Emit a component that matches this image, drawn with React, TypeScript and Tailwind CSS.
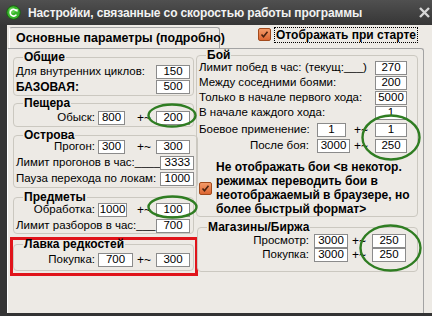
import type { ReactNode } from 'react'

function Inp({ v, w }: { v: string; w: string }) {
  return (
    <div className={`${w} h-[14px] flex-shrink-0 bg-white border border-[#8B8B8B] flex items-center justify-center text-[11.5px] leading-none text-black`}>
      {v}
    </div>
  )
}

function Group({ title, className, children }: { title: string; className: string; children: ReactNode }) {
  return (
    <fieldset className={`border border-[#CBC8C0] rounded-[4px] px-[2px] ${className}`}>
      <legend className="ml-[7px] px-[1px] text-[12px] font-bold leading-[8px] text-black">{title}</legend>
      {children}
    </fieldset>
  )
}

function Check() {
  return (
    <div className="w-[13px] h-[13px] flex-shrink-0 rounded-[2px] border border-[#A24A1C] bg-linear-to-b from-[#F39A68] to-[#DC6530] flex items-center justify-center">
      <svg width="9" height="9" viewBox="0 0 9 9">
        <path d="M1.5 4.5 L3.5 6.8 L7.5 1.8" fill="none" stroke="#4A2210" strokeWidth="1.6" />
      </svg>
    </div>
  )
}

// single input row on the left side
function RowL({ label, v, bold, h }: { label: string; v: string; bold?: boolean; h: string }) {
  return (
    <div className={`${h} flex items-center justify-between pr-[1px]`}>
      <span className={`whitespace-nowrap ${bold ? 'text-[12px] font-bold' : 'text-[11.5px]'}`}>{label}</span>
      <Inp v={v} w="w-[34px]" />
    </div>
  )
}

// label + pair of inputs on the left side
function PairL({ label, a, aw, b, h }: { label: string; a: string; aw: string; b: string; h: string }) {
  return (
    <div className={`${h} flex items-center text-[11.5px]`}>
      <span className="w-[79px] text-right whitespace-nowrap">{label}</span>
      <div className="w-[42px] pl-[3px] flex">
        <Inp v={a} w={aw} />
      </div>
      <span className="w-[19px] text-[12px]">+~</span>
      <Inp v={b} w="w-[34px]" />
    </div>
  )
}

function Ellipse({ cls, w, h }: { cls: string; w: number; h: number }) {
  return (
    <svg className={`absolute ${cls}`} width={w} height={h} viewBox={`0 0 ${w} ${h}`}>
      <ellipse cx={w / 2} cy={h / 2} rx={w / 2 - 1.5} ry={h / 2 - 1.5} fill="none" stroke="#2F7D22" strokeWidth="2.4" />
    </svg>
  )
}

export default function App() {
  return (
    <div className="relative w-[432px] h-[316px] overflow-hidden bg-[#333333] flex flex-col font-['Liberation_Sans',Arial,sans-serif] text-black">
      {/* Title bar */}
      <div className="h-[25px] flex-shrink-0 flex items-center bg-linear-to-b from-[#505050] to-[#363636]">
        <svg className="ml-[6px]" width="15" height="15" viewBox="0 0 15 15">
          <circle cx="7.5" cy="7.5" r="6.8" fill="#37B52A" stroke="#1C5E14" strokeWidth="1" />
          <circle cx="6" cy="5.5" r="3" fill="#7FE06A" opacity="0.6" />
          <path d="M10.6 6.2 A3.4 3.4 0 1 0 10.4 9.6" fill="none" stroke="#fff" strokeWidth="1.6" />
          <path d="M9 4.6 L11.8 4.2 L11.3 7.2 Z" fill="#fff" />
        </svg>
        <span className="ml-[7px] text-[12px] font-bold tracking-[-0.12px] text-[#F2F2F2] whitespace-nowrap">
          Настройки, связанные со скоростью работы программы
        </span>
        <div className="flex-1" />
        <svg className="mr-[2px]" width="11" height="11" viewBox="0 0 11 11">
          <path d="M1 1 L10 10 M10 1 L1 10" stroke="#D6D6D6" strokeWidth="2.4" />
        </svg>
      </div>

      <div className="flex-1 flex min-h-0">
        <div className="w-[7px] flex-shrink-0 bg-[#353535]" />
        <div className="flex-1 mb-[3px] bg-[#EDEAE5] flex flex-col min-w-0">
          {/* Tab strip */}
          <div className="h-[23px] flex-shrink-0 flex items-end">
            <div className="ml-[2px] w-[211px] h-[21px] border-l border-t border-r border-[#A3A3A3] border-l-white rounded-t-[3px] flex items-center pl-[6px]">
              <span className="text-[12.4px] font-bold whitespace-nowrap">Основные параметры (подробно)</span>
            </div>
            <div className="ml-[38px] mb-[5px] flex items-center self-end h-[17px]">
              <Check />
              <span className="ml-[3px] px-[1px] border border-dotted border-black text-[12px] font-bold leading-[14px] whitespace-nowrap">
                Отображать при старте
              </span>
            </div>
          </div>

          {/* Panel */}
          <div className="flex-1 w-[417px] border-t border-l border-r border-t-[#A3A3A3] border-l-white border-r-[#A3A3A3] rounded-tr-[3px] flex">
            {/* Left column */}
            <div className="w-[189px] pl-[2px] flex flex-col">
              <Group title="Общие" className="ml-[3px] w-[181px] mt-[4px] pt-[3px] pb-[1px]">
                <RowL label="Для внутренних циклов:" v="150" h="h-[15px]" />
                <RowL label="БАЗОВАЯ:" v="500" bold h="h-[15px]" />
              </Group>
              <Group title="Пещера" className="ml-[3px] w-[181px] mt-[3px] pt-[3px] pb-[1px]">
                <PairL label="Обыск:" a="800" aw="w-[27px]" b="200" h="h-[15px]" />
              </Group>
              <Group title="Острова" className="ml-[3px] w-[181px] mt-[4px] pb-0">
                <PairL label="Прогон:" a="300" aw="w-[27px]" b="300" h="h-[16px]" />
                <RowL label="Лимит прогонов в час:____" v="3333" h="h-[16px]" />
                <RowL label="Пауза перехода по локам:" v="1000" h="h-[16px]" />
              </Group>
              <Group title="Предметы" className="ml-[3px] w-[181px] mt-[5px] pt-[1px] pb-0">
                <PairL label="Обработка:" a="1000" aw="w-[29px]" b="100" h="h-[16px]" />
                <RowL label="Лимит разборов в час:___" v="700" h="h-[15px]" />
              </Group>
              <div className="mt-[3px] w-[188px] border-[3px] border-[#E0141B] pb-[2px]">
                <Group title="Лавка редкостей" className="w-[181px] pt-[4px] pb-[3px]">
                  <PairL label="Покупка:" a="700" aw="w-[35px]" b="300" h="h-[15px]" />
                </Group>
              </div>
            </div>

            {/* Right column */}
            <div className="flex flex-col">
              <Group title="Бой" className="-ml-[1px] w-[222px] mt-[2px] pt-[1px] pb-0">
                <div className="h-[15px] flex items-center text-[11.5px] whitespace-nowrap">
                  <span className="w-[106px]">Лимит побед в час:</span>
                  <span>(текущ:___)</span>
                  <div className="flex-1" />
                  <div className="mr-[8px]"><Inp v="270" w="w-[32px]" /></div>
                </div>
                <div className="h-[15px] flex items-center justify-between text-[11.5px] whitespace-nowrap">
                  <span>Между соседними боями:</span>
                  <div className="mr-[8px]"><Inp v="200" w="w-[32px]" /></div>
                </div>
                <div className="h-[15px] flex items-center justify-between text-[11.5px] whitespace-nowrap">
                  <span>Только в начале первого хода:</span>
                  <div className="mr-[8px]"><Inp v="5000" w="w-[32px]" /></div>
                </div>
                <div className="h-[15px] flex items-center justify-between text-[11.5px] whitespace-nowrap">
                  <span>В начале каждого хода:</span>
                  <div className="mr-[8px]"><Inp v="1" w="w-[32px]" /></div>
                </div>
                <div className="mt-[2px] h-[16px] flex items-center text-[11.5px] whitespace-nowrap">
                  <span className="w-[110px] text-right">Боевое применение:</span>
                  <div className="w-[45px] pl-[8px] flex"><Inp v="1" w="w-[29px]" /></div>
                  <span className="w-[21px] text-[12px]">+~</span>
                  <Inp v="1" w="w-[32px]" />
                </div>
                <div className="h-[16px] flex items-center text-[11.5px] whitespace-nowrap">
                  <span className="w-[110px] text-right">После боя:</span>
                  <div className="w-[45px] pl-[8px] flex"><Inp v="3000" w="w-[33px]" /></div>
                  <span className="w-[21px] text-[12px]">+~</span>
                  <Inp v="250" w="w-[32px]" />
                </div>
                <div className="mt-[6px] flex items-center">
                  <Check />
                  <p className="ml-[4px] text-[12px] font-bold leading-[14px] whitespace-nowrap">
                    Не отображать бои &lt;в некотор.
                    <br />
                    режимах переводить бои в
                    <br />
                    неотображаемый в браузере, но
                    <br />
                    более быстрый формат&gt;
                  </p>
                </div>
              </Group>
              <Group title="Магазины/Биржа" className="w-[221px] mt-[6px] pt-[3px] pb-[9px]">
                <div className="h-[14px] flex items-center text-[11.5px]">
                  <span className="w-[109px] text-right">Просмотр:</span>
                  <div className="w-[43px] pl-[5px] flex"><Inp v="3000" w="w-[34px]" /></div>
                  <span className="w-[20px] text-[12px]">+~</span>
                  <Inp v="250" w="w-[34px]" />
                </div>
                <div className="h-[14px] flex items-center text-[11.5px]">
                  <span className="w-[109px] text-right">Покупка:</span>
                  <div className="w-[43px] pl-[5px] flex"><Inp v="3000" w="w-[34px]" /></div>
                  <span className="w-[20px] text-[12px]">+~</span>
                  <Inp v="250" w="w-[34px]" />
                </div>
              </Group>
            </div>
          </div>
        </div>
      </div>

      {/* annotation ellipses drawn over the form */}
      <Ellipse cls="left-[147px] top-[103px]" w={50} h={25} />
      <Ellipse cls="left-[147px] top-[195px]" w={51} h={24} />
      <Ellipse cls="left-[361px] top-[114px]" w={60} h={47} />
      <Ellipse cls="left-[359px] top-[224px]" w={63} h={48} />
    </div>
  )
}
